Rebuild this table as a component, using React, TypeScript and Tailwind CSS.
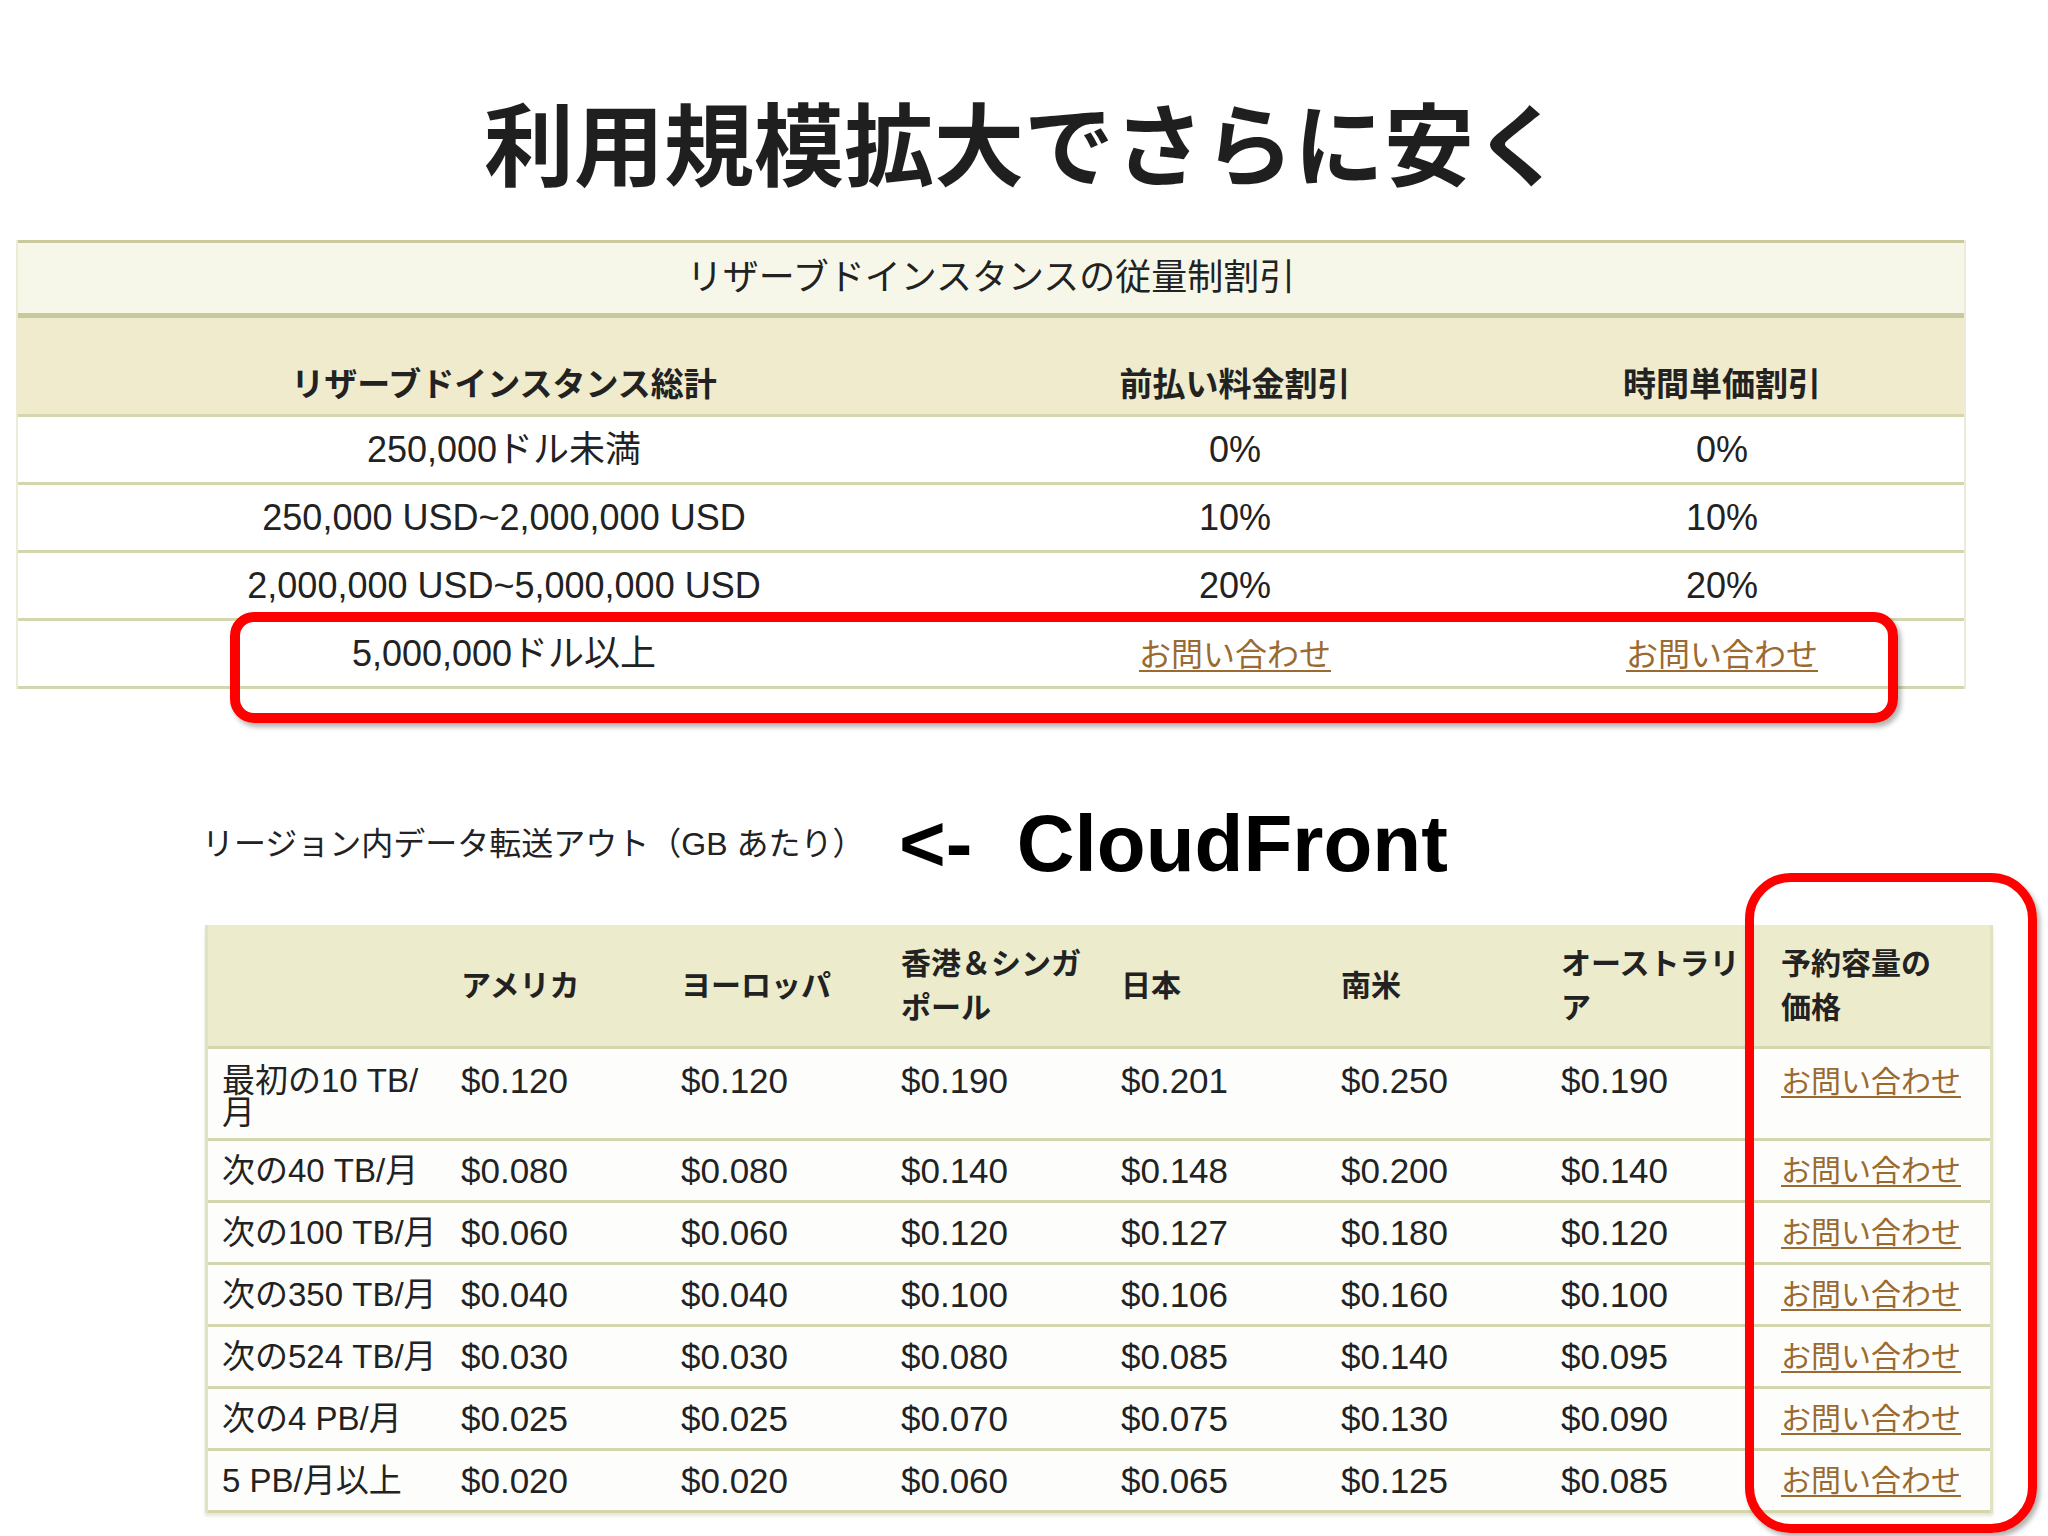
const tierRows = [
  { label: "250,000ドル未満", upfront: "0%", hourly: "0%" },
  { label: "250,000 USD~2,000,000 USD", upfront: "10%", hourly: "10%" },
  { label: "2,000,000 USD~5,000,000 USD", upfront: "20%", hourly: "20%" },
  { label: "5,000,000ドル以上", upfront: null, hourly: null },
];

const regions = ["アメリカ", "ヨーロッパ", "香港＆シンガ\nポール", "日本", "南米", "オーストラリ\nア", "予約容量の\n価格"];

const priceRows = [
  { label: "最初の10 TB/\n月", prices: ["$0.120", "$0.120", "$0.190", "$0.201", "$0.250", "$0.190"] },
  { label: "次の40 TB/月", prices: ["$0.080", "$0.080", "$0.140", "$0.148", "$0.200", "$0.140"] },
  { label: "次の100 TB/月", prices: ["$0.060", "$0.060", "$0.120", "$0.127", "$0.180", "$0.120"] },
  { label: "次の350 TB/月", prices: ["$0.040", "$0.040", "$0.100", "$0.106", "$0.160", "$0.100"] },
  { label: "次の524 TB/月", prices: ["$0.030", "$0.030", "$0.080", "$0.085", "$0.140", "$0.095"] },
  { label: "次の4 PB/月", prices: ["$0.025", "$0.025", "$0.070", "$0.075", "$0.130", "$0.090"] },
  { label: "5 PB/月以上", prices: ["$0.020", "$0.020", "$0.060", "$0.065", "$0.125", "$0.085"] },
];

function Contact({ size }: { size: string }) {
  return (
    <a href="#" className={`${size} text-[#9a6a30] underline underline-offset-4 decoration-2`}>
      お問い合わせ
    </a>
  );
}

export default function App() {
  return (
    <div className="relative w-[2048px] h-[1536px] overflow-hidden bg-white text-[#222] font-['Liberation_Sans','Noto_Sans_CJK_JP',sans-serif]">
      {/* Slide title */}
      <div className="h-[240px] pt-[88px] text-center">
        <h1 className="text-[90px] leading-[104px] font-bold text-[#1f1f1f] font-['Noto_Sans_CJK_JP',sans-serif]">
          利用規模拡大でさらに安く
        </h1>
      </div>

      {/* Reserved instance volume discount */}
      <div className="ml-4 w-[1950px] border-x-2 border-[#ebebd6]">
        <div className="h-[78px] flex items-center justify-center bg-[#f7f7e9] border-t-[3px] border-b-[5px] border-[#c9c99d] text-[36px]">
          リザーブドインスタンスの従量制割引
        </div>
        <div className="grid grid-cols-[972px_490px_484px] h-[99px] items-end pb-[5px] bg-[#efebcc] border-b-[3px] border-[#d4d6ae] text-[33px] font-bold text-center">
          <div>リザーブドインスタンス総計</div>
          <div>前払い料金割引</div>
          <div>時間単価割引</div>
        </div>
        {tierRows.map((r) => (
          <div
            key={r.label}
            className="grid grid-cols-[972px_490px_484px] h-[68px] items-center border-b-[3px] border-[#d4d6ae] text-[36px] text-center"
          >
            <div>{r.label}</div>
            <div>{r.upfront ?? <Contact size="text-[32px]" />}</div>
            <div>{r.hourly ?? <Contact size="text-[32px]" />}</div>
          </div>
        ))}
      </div>

      {/* CloudFront section heading */}
      <div className="mt-[105px] h-[100px] flex items-center pl-[202px]">
        <div className="w-[697px] text-[32px]">リージョン内データ転送アウト（GB あたり）</div>
        <div className="text-[80px] font-bold text-black whitespace-pre">
          {"<-  CloudFront"}
        </div>
      </div>

      {/* Data transfer pricing */}
      <div className="mt-[31px] ml-[205px] w-[1788px] border-x-[3px] border-[#e0e2c2] shadow-[0_3px_3px_rgba(180,180,140,0.35)]">
        <div className="grid grid-cols-[237px_220px_220px_220px_220px_220px_220px_225px] h-[124px] items-center bg-[#ecebcc] border-b-[3px] border-[#d4d6ae] text-[30px] leading-[44px] font-bold">
          <div />
          {regions.map((h) => (
            <div key={h} className="pl-4 whitespace-pre">
              {h}
            </div>
          ))}
        </div>
        {priceRows.map((r, i) => (
          <div
            key={r.label}
            className={`grid grid-cols-[237px_220px_220px_220px_220px_220px_220px_225px] border-b-[3px] border-[#d4d6ae] bg-[#fdfdfb] text-[33px] leading-[32px] ${
              i === 0 ? "h-[92px] items-start pt-[16px]" : "h-[62px] items-center"
            }`}
          >
            <div className="pl-[14px] whitespace-pre">{r.label}</div>
            {r.prices.map((p, j) => (
              <div key={j} className="pl-4 text-[35px]">
                {p}
              </div>
            ))}
            <div className="pl-4">
              <Contact size="text-[30px]" />
            </div>
          </div>
        ))}
      </div>

      {/* Highlight boxes */}
      <div className="absolute left-[230px] top-[612px] w-[1668px] h-[111px] rounded-[24px] border-[10px] border-[#ff0000] shadow-[3px_4px_5px_rgba(0,0,0,0.3)]" />
      <div className="absolute left-[1745px] top-[873px] w-[292px] h-[660px] rounded-[46px] border-[9px] border-[#ff0000] shadow-[3px_4px_5px_rgba(0,0,0,0.3)]" />
    </div>
  );
}
